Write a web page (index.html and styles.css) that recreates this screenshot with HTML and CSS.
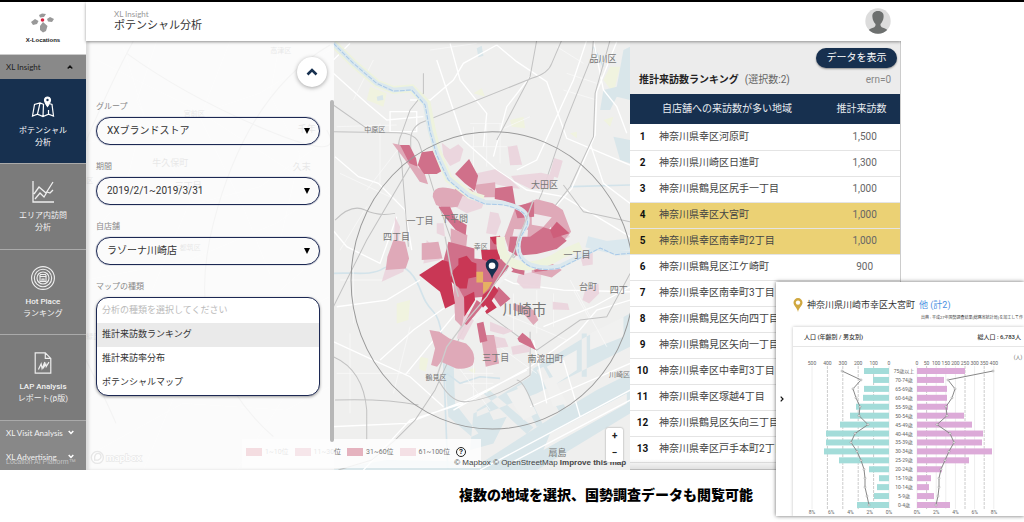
FILE: index.html
```html
<!DOCTYPE html>
<html lang="ja">
<head>
<meta charset="utf-8">
<title>ポテンシャル分析</title>
<link rel="stylesheet" href="styles.css">
</head>
<body>
<div class="app">
  <aside class="sidebar">
    <div class="logo">
      <svg width="24" height="20" viewBox="0 0 24 20"><g fill="#999"><path d="M8 2l3-1.500 4 .5-2 3-4 .5z M0 9l4-3 3.500 2-1.500 3-4 1z M16 6l3-2 4 2-2 3-4-.5z M9 13l3-4 4.500 4-1.500 5-3 1.500-3-2.500z"/></g><circle cx="11.500" cy="7" r="1.800" fill="#d8203f"/></svg>
      <span>X-Locations</span>
    </div>
    <button class="section open">XL Insight <svg width="6" height="4" viewBox="0 0 6 4"><path d="M.7 3.500L3 1l2.300 2.500" fill="none" stroke="#111" stroke-width="1.300"/></svg></button>
    <nav class="nav">
      <a class="item active" href="#">
        <svg width="24" height="22" viewBox="0 0 24 22" fill="none" stroke="#fff" stroke-width="1.200"><path d="M13 8.500L9 7 3.500 8.500 1.500 20l5-1.800 5.500 2.300 5.500-2.300 5 1.800L21 8.500l-2-.7M9 7L6.500 18M12.500 8.500L12 20.500M17.500 14v4"/><path d="M16.500 1a3 3 0 0 0-3 3c0 2 3 6.500 3 6.500s3-4.500 3-6.500a3 3 0 0 0-3-3z" fill="#fff"/><circle cx="16.500" cy="4" r="1.200" fill="#17304f" stroke="none"/></svg>
        <span>ポテンシャル<br>分析</span>
      </a>
      <a class="item" href="#">
        <svg width="24" height="22" viewBox="0 0 24 22" fill="none" stroke="#eee" stroke-width="1.300"><path d="M2 0v21h21M3 13l5-7 7 6 7-11M4 18l5-6 4 4 3-5 3 1 3-3"/></svg>
        <span>エリア内訪問<br>分析</span>
      </a>
      <a class="item" href="#">
        <svg class="round" width="24" height="24" viewBox="0 0 24 24" fill="none" stroke="#eee" stroke-width="1.100"><circle cx="12" cy="12" r="11.400"/><circle cx="12" cy="12" r="8.700"/><circle cx="12" cy="12" r="6"/><path d="M9 11v4.500h6V11M8.500 10.500l1-2h5l1 2M8.500 10.500h7M11 15.500v-2.500h2v2.500"/></svg>
        <span><b>Hot Place</b><br>ランキング</span>
      </a>
      <a class="item" href="#">
        <svg width="20" height="22" viewBox="0 0 20 24" fill="none" stroke="#eee" stroke-width="1.300"><path d="M1.500 1h11l6 6v16h-17zM12.500 1v6h6M5 19l3-6 1 5 3-7-2 7 3-5 .5 3 3-5"/></svg>
        <span><b>LAP Analysis</b><br>レポート(β版)</span>
      </a>
    </nav>
    <div class="more">
      <button class="section">XL Visit Analysis <svg width="6" height="5" viewBox="0 0 6 5"><path d="M.7 1L3 3.500 5.300 1" fill="none" stroke="#fff" stroke-width="1.500"/></svg></button>
      <button class="section">XL Advertising <svg width="6" height="5" viewBox="0 0 6 5"><path d="M.7 1L3 3.500 5.300 1" fill="none" stroke="#fff" stroke-width="1.500"/></svg></button>
      <small class="tagline">Location AI Platform™</small>
    </div>
  </aside>

  <div class="main">
    <header class="header">
      <div class="titles"><small>XL Insight</small><h1>ポテンシャル分析</h1></div>
      <svg class="avatar" width="26" height="26" viewBox="0 0 26 26"><circle cx="13" cy="13" r="12.700" fill="#dcdcdc"/><path d="M13 3c-4 0-6 2.500-5.600 6 .2 3 1.600 5.600 3.100 7 .3 2-.5 3-2.500 3.800-2 .7-3.300 1.200-4.200 2.300A12.700 12.700 0 0 0 13 25.700a12.700 12.700 0 0 0 9.200-3.600c-.9-1.100-2.200-1.600-4.200-2.300-2-.8-2.800-1.800-2.500-3.800 1.500-1.400 2.900-4 3.100-7C19 5.500 17 3 13 3z" fill="#6d706f"/></svg>
    </header>

    <div class="content">
      <section class="map">
        <svg class="canvas" viewBox="-732 3 1632 1287" preserveAspectRatio="xMaxYMin slice">
          <rect x="-740" y="0" width="1700" height="1300" fill="#efefee"/>
          <g fill="#f0f3df">
            <path d="M120 140l50 20-10 40-50-20z M200 790l40-10-5 60-35 10z M270 950l25 5-8 40-20-8z M540 240l40-10 5 35-40-5z M430 160l25-15 10 25z M820 120l20-40 30 0-20 80z M820 240l30-10-10 30z M720 280l20-5v20z M415 990l20-8v20z M465 1050l18-6v22z"/>
          </g>
          <g fill="#d9e6ea">
            <path d="M820 150l40-10 20-110 20-10v160l-40-10-20 40-30 0z M850 290l50 10v70l-30-10z M440 25l15-8 5 30-15 5z M140 170l18-5 2 15-18 2z"/>
            <path d="M900 820L750 900 610 985 600 1010 440 1110 440 1130 620 1060 900 920z M420 1290L700 1110 800 1050 900 1000V1120L620 1290z M340 950l15 180 70 60 20-10-70-90-5-140z M430 1120l40-20 20 40 40-10-40 80-70 20z M0 1290l170-30 260 5v25z M755 880h15v130h-15z M640 980l70 130-20 10-70-130z M460 1060l20-8 130 110-20 20z M560 1040l18-8 60 120-18 8z"/>
          </g>
          <g fill="#f1f1f0"><path d="M650 980l90-50v60l-60 40z M780 880l100-50v60l-100 40z M530 1060l50-20 40 80-40 20z M660 1180l230-120v30l-250 140z M640 1020l30-10 40 80-40 10z"/></g>
          <g fill="none" stroke="#d3e3ea" stroke-width="5"><path d="M10 700c60-5 110 10 150-15s80 0 100 40 20 60 50 90 30 120 33 220l10 250M720 440l180-5M350 1000l40 30 60-20 60 5M820 80l-30-60"/></g>
          <g fill="none" stroke="#fff" stroke-width="4">
            <path d="M10 100l100 90 60 50 110-10M15 350l70 60 60 20 80 80 20 120M60 10l-50 50M240 180l60 0 70-60 30-50 100-55 M500 15l60 50 90 60 60 170 190 80M320 60l80 240 100 90 90 60 110 20 200 120M600 110l-70 90-40 150M860 5l-60 150-5 130-70 160-220 250-100 90-180 220M790 0l30 150 40 50 30 80M0 560l50 60 100 50 50-140M20 800l150-20 100-60M0 900l130 60 110 50 100 90M150 960l100-90 140-100M470 690l80 40 150 20 200 5M370 1110l230-130 140-100 60-70 100-30M0 1160l230-10 180-70 180-90M600 1100l300-130M640 860l150-60 110-60M450 1290l450-240M540 1270l360-190M100 1290l140-150 160-50M180 215l80 0v60l-80 0zM770 0l-40 120-110 240-60 30M360 10l30 110 80 100-10 100M780 310l40 120 80 60M610 900l40 190M700 960l50 170"/>
          </g>
          <g fill="none" stroke="#fafafa" stroke-width="2">
            <path d="M20 260l180-5M30 400l170 80M70 180l60-120M300 30l140-20M420 250h100M430 260v140M470 250v130M510 250v120M420 320h110M710 100l90 30M700 150l100 30M600 230l-90 40M680 20l80 50M30 720h130M70 680v170M20 1000h220M60 880v240M240 860l-50 200M520 820l190 80M550 760v120M620 750v130M670 760v100M730 750l50 90M480 900l140 100M370 960l110 150M430 960v110M470 960v100M400 1000h90M400 1030h90M720 720l110 200M110 500l-80 130M110 450l100-130M150 250v180"/>
            <path d="M-700 60l300 150 400 260M-620 20l60 200-60 250-100 120M-732 310l250-60 270-90 230-140M-520 3l-60 180 160 300-140 330M-400 490l190-50 200-140M-300 3l-90 230 130 270 80 200M-732 720l310-60 260-110 160-110M-732 900l260-110 300 70 170-90M-732 1080l400-200 300 60M-732 1250l290-160 310 20 130-70M-560 1290l130-310 190-150 160-140M-280 1290l150-230-60-260M-150 3l-30 160 90 180-60 260"/>
          </g>
          <g fill="none" stroke="#c2c2c2" stroke-width="3">
            <path d="M-590 3q-60 110-142 300M-610 40q180 130 420 230t180 0M0 15Q-250 160-350 550T-170 1190M-732 960q60 120 90 190M10 195l100 70M10 275l190 3q60 0 70 40l40 130 60 170 30 60M280 100l0 60-40 50-25 70q-20 40 0 90l20 250M695 0l-30 70q-10 30-60 45L280 245q-40 15-38 60l0 70L110 600 10 800M790 0l-5 50-80 200-70 210-110 240-50 60-50 60-60 120-50 110-60 90-60 60-70 60-100 30M840 0l-45 160-5 130-70 150-150 190-90 110M620 0l-20 110-100 190M15 540q50-50 90-30t90 10M700 435l60 80 140 30M470 820l150 110 130-90 80-10 70-130M320 1010q40 80 90 75 90-10 190-80v-130M10 950q90 40 100 160v90M15 1080q150-5 250 15M560 1020q20 0 50 80"/>
          </g>
          <g fill="#ead4dc" opacity=".92">
            <path d="M335 308l25 20 25-15 15 15-10 35-30 15-20-30z M533 320l28-4 15 58-36 2z M672 354l26 8-15 52-25-10z M440 400l55-12 45 30 30 28-25-2-50-12-60 5z M543 408l90-10 40 10-10 35-60 5-50-25z M375 465l50-15 40 30-10 25-45 15-35-20z M480 515l25 5 8 25-15 40-30-5z M195 530l15 30-5 60-15 0z M320 550l20 0 5 40-25-10z M748 638l40-5v40l-30 5z M565 705l70-15-5 55-50 0-20-20z M765 750l40-20 2 30-30 30-20-10z M668 785l45 5 5 20-50-2z M543 920l60-12-5 28-50 8z M475 885l50 10 10 25-45 5z M290 600l20 20 20 40-50 10z M180 640l50 5-10 50-65 30z M480 845l70 28-30 10-40-10z M630 600l70-40 20 30-50 25z M610 510l60 10-20 40-40-15z M400 820l40 5-40 75-20-5z"/>
          </g>
          <g fill="#dfa9b8">
            <path d="M187 310l25 5 30 50 40 30 12 38-25-8-40-60z M308 470q0-35 50-25l45 10-20 45-40 5-25-10z M375 438l50 10 10 15-20 12-40-20z M430 435l65-8 3 45-50 0z M190 600l35 5 12 50-10 30-60 5 5-40z M275 610l50-5 12 50-62 5z M362 565l50 20-5 50-45-20z M298 870l30 5 30 20 50 15q35 30 20 65-20 15-50 10l-45-20-12 15-18-5 12-50z M452 885l40 0 15 85-40 10z M370 720l40 60-15 80-20-20z M550 790l40 10 20 10 15 30-15 15-30-35-30-10z M555 505l65-27 48 12 30 20 25 65-20 25-60 15-60 20-45 0-15-45z M605 665l45-5 45 30-30 22-60-15z"/>
          </g>
          <g fill="#efe9eb"><path d="M605 520l60 12-25 28-35-6z M552 567l42 2-2 24-45-4z M640 590l22-30 12 40z"/></g>
          <g fill="#d0708a">
            <path d="M375 402l42-45 27 50-10 45-30-22z M263 375l12-38 50-7 15 60-20 12-38 0z M495 445l52-7 10 62-35-18-28-5z M325 500l35 0 15 35 35 20-3 30-30-15-25-30z M540 590l60 0 40-28 35 10 35 30-30 25-60 15-60 5-25-15z M355 605l78 20 0 30 50 5 55-5 8 10-38 50-15 25-30 30-60 5-25-45-28-10-12-50z M480 590l30 0 0 60-30-10z M440 850l20-5 12 58-22 5z M562 895l15-17 25 20 15 32-50-25z M440 780l20 15-50 60-8-5z M490 770l15-30 36 36-30 24z M545 680l40 0-3 25-40-10z M605 668l42-2 5 25-38 5z M210 315l28 0 20 40 5 25-25-10z M552 500l60-15 0 45-50 5z"/>
          </g>
          <g fill="#c93755">
            <path d="M267 705l70-45 18 5 20 125-30 15-15-50z M370 690l15-15 0-20 25-8 15 18 14 5 0 40-24 5-5 30-20 0-20-15-10-10z M453 630l50-2 8 30-40 5-15-5z M402 770l30-15 3 25-32 50z M458 765l35-28 12 15-20 30 15 20-30 20-18-30z M480 592l30-5 4 30-22-5z"/>
          </g>
          <path d="M660 570l20-25 38 35-48 15z" fill="#ce5e7a"/>
          <path d="M439 695h20v32h-20z M459 726h28l-12 20-16 16z" fill="#e6b063"/>
          <path d="M512 590q-5 80 70 88 60 0 110-35l60-25" fill="none" stroke="#eef3dd" stroke-width="26"/>
          <path d="M10 10l60 60 70 60 50 20 55-5 45 45 15 80 15 60 35 85 65 50 40 12" fill="none" stroke="#eef3dd" stroke-width="24"/>
          <path d="M10 10l60 60 70 60 50 20 55-5 40 45 15 80 20 70 35 75 60 50 50 22 50 2q90 15 75 65l-20 35q-20 60 30 85 40 15 90 5l60-30 60-30 45 20 100-2" fill="none" stroke="#dbe8ee" stroke-width="14"/>
          <path d="M770 605l60 15 70-8" fill="none" stroke="#dbe8ee" stroke-width="34"/>
          <path d="M10 10l60 60 70 60 50 23 55-3 40 45 15 80 20 70 35 75 60 50 50 22 50 2q90 15 75 65l-20 35q-20 60 30 85 40 15 90 5l60-30 60-30 45 20 100-10" fill="none" stroke="#a9c9e8" stroke-width="3" stroke-dasharray="14 4"/>
          <path d="M545 685l-50 55M470 800l-40 40" fill="none" stroke="#f2f2f2" stroke-width="12"/>
          <path d="M610 480l-60 160-80 130-60 70-60 80-30 90M345 590l20 110 20 70" fill="none" stroke="#ccc" stroke-width="4"/>
          <ellipse cx="487" cy="721" rx="424" ry="446" fill="none" stroke="#999" stroke-width="3"/>
          <g class="place" text-anchor="middle">
            <g class="md"><text x="819" y="66">品川区</text><text x="643" y="443">大田区</text><text x="270" y="551">一丁目</text><text x="373" y="547">下平間</text><text x="199" y="601">四丁目</text><text x="741" y="654">一丁目</text><text x="774" y="751">台町</text><text x="866" y="760">四丁</text><text x="497" y="962">三丁目</text><text x="646" y="966">南渡田町</text><text x="682" y="1249">扇島</text><text x="-479" y="379">牛久保町</text><text x="-85" y="391">久末</text><text x="-425" y="446">三丁目</text><text x="-70" y="275">千年</text></g>
            <g class="sm"><text x="134" y="277">中原区</text><text x="452" y="627">幸区</text><text x="318" y="1021">鶴見区</text><text x="868" y="1011">川崎区</text><text x="-148" y="40">高津区</text><text x="-407" y="229">宮前区</text><text x="-419" y="629">都筑区</text><text x="-721" y="429">区</text><text x="-710" y="898">緑区</text></g>
            <text class="lg" x="583" y="826">川崎市</text>
          </g>
          <path d="M486 717c-4-20-19-26-19-42a19 19 0 0 1 38 0c0 16-15 22-19 42z" fill="#17304f"/><circle cx="486" cy="677" r="10" fill="#fff"/>
          <g fill="#fff" stroke="#777" stroke-width="4"><circle cx="-698" cy="1252" r="18"/><path d="M-706 1260v-10q2-10 10-10t9 8-9 12z"/><text class="brand" x="-672" y="1262">mapbox</text></g>
        </svg>
        <div class="legend">
          <span><i class="l1"></i>1~10位</span><span><i class="l2"></i>11~30位</span><span><i class="l3"></i>31~60位</span><span><i class="l4"></i>61~100位</span>
          <button class="help" aria-label="ヘルプ">?</button>
        </div>
        <div class="credit"><a href="#">© Mapbox</a> <a href="#">© OpenStreetMap</a> <a href="#"><b>Improve this map</b></a></div>
        <div class="zoom"><button>+</button><button>−</button></div>

        <form class="panel">
          <button class="collapse" type="button" aria-label="閉じる"><svg width="12" height="8" viewBox="0 0 12 8"><path d="M1.500 6.500L6 2l4.500 4.500" fill="none" stroke="#17304f" stroke-width="2.600"/></svg></button>
          <label for="group">グループ</label>
          <div class="field"><select id="group"><option>XXブランドストア</option></select></div>
          <label for="term">期間</label>
          <div class="field"><select id="term"><option>2019/2/1~2019/3/31</option></select></div>
          <label for="shop">自店舗</label>
          <div class="field"><select id="shop"><option>ラゾーナ川崎店</option></select></div>
          <label for="kind">マップの種類</label>
          <select id="kind" class="list" size="4"><option class="hint" disabled>分析の種類を選択してください</option><option class="hover">推計来訪数ランキング</option><option>推計来訪率分布</option><option>ポテンシャルマップ</option></select>
        </form>
      </section>

      <section class="ranking">
        <div class="ranking-head">
          <button class="show">データを表示</button>
          <div class="ranking-title"><h2>推計来訪数ランキング</h2><span>(選択数:2)</span><span class="ern">ern=0</span></div>
        </div>
        <table>
          <thead><tr><th class="no"></th><th class="area">自店舗への来訪数が多い地域</th><th class="num">推計来訪数</th></tr></thead>
          <tbody>
            <tr><th>1</th><td>神奈川県幸区河原町</td><td>1,500</td></tr>
            <tr><th>2</th><td>神奈川県川崎区日進町</td><td>1,300</td></tr>
            <tr><th>3</th><td>神奈川県鶴見区尻手一丁目</td><td>1,000</td></tr>
            <tr class="on"><th>4</th><td>神奈川県幸区大宮町</td><td>1,000</td></tr>
            <tr class="on"><th>5</th><td>神奈川県幸区南幸町2丁目</td><td>1,000</td></tr>
            <tr><th>6</th><td>神奈川県鶴見区江ケ崎町</td><td>900</td></tr>
            <tr><th>7</th><td>神奈川県幸区南幸町3丁目</td><td></td></tr>
            <tr><th>8</th><td>神奈川県鶴見区矢向四丁目</td><td></td></tr>
            <tr><th>9</th><td>神奈川県鶴見区矢向一丁目</td><td></td></tr>
            <tr><th>10</th><td>神奈川県幸区中幸町3丁目</td><td></td></tr>
            <tr><th>11</th><td>神奈川県幸区塚越4丁目</td><td></td></tr>
            <tr><th>12</th><td>神奈川県鶴見区矢向三丁目</td><td></td></tr>
            <tr><th>13</th><td>神奈川県幸区戸手本町2丁目</td><td></td></tr>
          </tbody>
        </table>
      </section>
    </div>
  </div>
</div>

<p class="caption">複数の地域を選択、国勢調査データも閲覧可能</p>

<aside class="popup">
  <button class="next" aria-label="開閉"><svg width="4" height="6" viewBox="0 0 4 6"><path d="M.7.7L3 3 .7 5.300" fill="none" stroke="#111" stroke-width="1.200"/></svg></button>
  <div class="popup-body">
    <div class="place-row">
      <svg width="10" height="14" viewBox="0 0 10 14"><path d="M5 14C4 9.500.5 8 .5 4.600a4.500 4.500 0 0 1 9 0C9.500 8 6 9.500 5 14z" fill="#d0a840"/><circle cx="5" cy="4.600" r="2.200" fill="#fff"/></svg>
      <h3>神奈川県川崎市幸区大宮町</h3><a href="#">他 (計2)</a>
    </div>
    <p class="source">出典 : 平成27年国勢調査結果(総務省統計局)を加工して作</p>
    <div class="card">
      <div class="card-head"><b>人口 (年齢別 / 男女別)</b><b>総人口 : 6,783人</b></div>
      <svg class="chart" id="chart" viewBox="0 0 231 170" preserveAspectRatio="xMinYMin slice"></svg>
    </div>
  </div>
</aside>
<script src="chart.js"></script>
</body>
</html>
```
FILE: chart.js
```js
// Population pyramid: men to the left, women to the right, share as a line.
const ages = ['75歳以上','70-74歳','65-69歳','60-64歳','55-59歳','50-54歳','45-49歳','40-44歳','35-39歳','30-34歳','25-29歳','20-24歳','15-19歳','10-14歳','5-9歳','0-4歳'];
const men = [25,16,25,26,33,39,49,63,63,65,50,20,10,12,15,32];
const women = [48,27,30,30,31,47,55,66,65,75,52,25,14,12,17,33];
const menLine = [47,28,36,33,29,30,21,34,38,32,28,25,24,24,22,20];
const womenLine = [76,31,38,35,29,30,20,33,37,32,28,24,22,22,21,19];
const L = 96, R = 124, top0 = 24;
const y = i => top0 + i * 134 / 15;
let out = '';
const text = (x, yy, s) => { out += `<text x="${x}" y="${yy}">${s}</text>`; };
const grid = (x, dash) => { out += `<line class="${dash ? 'dash' : 'rule'}" x1="${x}" x2="${x}" y1="19" y2="162"/>`; };
[500,400,300,200,100,0].forEach((v, i) => { const x = 19 + i * 15.4; grid(x, i > 0 && i < 5); text(x, 18, v); });
[0,50,100,150,200,250,300,350,400].forEach((v, i) => { const x = R + i * 9.6; grid(x, [1,5,7].includes(i)); text(x, 18, v); });
[8,6,4,2,0].forEach((v, i) => { text(19 + i * 19.25, 167, v + '%'); text(R + (4 - i) * 19.25, 167, v + '%'); });
ages.forEach((a, i) => {
  out += `<rect class="men" x="${L - men[i]}" y="${y(i) - 3}" width="${men[i]}" height="6"/>`;
  out += `<rect class="women" x="${R}" y="${y(i) - 3}" width="${women[i]}" height="6"/>`;
  text(111, y(i) + 2, a);
});
const line = (base, sign, data) => {
  out += `<polyline points="${data.map((v, i) => (base + sign * v) + ',' + y(i)).join(' ')}"/>`;
  data.forEach((v, i) => { out += `<circle cx="${base + sign * v}" cy="${y(i)}" r="1"/>`; });
};
line(L, -1, menLine);
line(R, 1, womenLine);
text(225, 12, '(人)');
document.getElementById('chart').innerHTML = out;
```
FILE: styles.css
```css
* { box-sizing: border-box; }
body { margin: 0; border-top: 2px solid #000; height: 100vh; overflow: hidden; position: relative; background: #fff; color: #333; font: 10px/12px Roboto, "Noto Sans CJK JP", sans-serif; }
button { font: inherit; border: 0; padding: 0; background: none; color: inherit; }
a { color: inherit; text-decoration: none; }
h1, h2, h3, p { margin: 0; font-weight: 400; }
svg { display: block; flex: none; }

.app { display: flex; width: 88%; height: calc(90vh - 2px); overflow: hidden; }
.sidebar { width: 86px; flex: none; display: flex; flex-direction: column; background: #7b7b7b; color: #f2f2f2; }
.logo { height: 53px; flex: none; background: #fff; border-bottom: 1px solid #ccc; color: #222; display: flex; flex-direction: column; align-items: center; padding-top: 11px; gap: 1px; font: bold 6px/12px "Liberation Sans", sans-serif; }
.section { display: flex; align-items: center; justify-content: space-between; width: 100%; height: 24px; padding: 0 12px 0 6px; font: 8px/12px Lato, sans-serif; white-space: nowrap; }
.section.open { background: #898989; color: #222; padding-right: 13px; flex: none; }
.nav { flex: 1; display: flex; flex-direction: column; }
.item { flex: 1; display: flex; flex-direction: column; align-items: center; gap: 7px; padding-top: 17px; border-bottom: 1px solid #aaa; text-align: center; font-size: 8px; }
.item b { font-weight: 500; }
.item.active { background: #17304f; color: #fff; }
.item .round { margin: -1px; }
.more { height: 49px; flex: none; background: #888; position: relative; }
.tagline { position: absolute; left: 6px; bottom: 3px; font: 7px/10px "Liberation Sans", sans-serif; color: #c4c4c4; white-space: nowrap; }

.main { flex: 1; min-width: 0; display: flex; flex-direction: column; }
.header { height: 39px; flex: none; display: flex; justify-content: space-between; align-items: center; padding: 0 10px 2px 28px; background: #fff; box-shadow: 0 1px 3px rgba(0,0,0,.4); z-index: 2; }
.titles small { display: block; font: 8px/10px Lato, sans-serif; color: #999; }
.titles h1 { font-size: 11px; line-height: 14px; color: #333; }
.content { flex: 1; display: flex; min-height: 0; }

.map { flex: 1; position: relative; overflow: hidden; min-width: 0; }
.canvas { width: 100%; height: 100%; }
.place text { fill: #777; font-family: "Noto Sans CJK JP", sans-serif; }
.place .md text { font-size: 27px; }
.place .sm text { font-size: 21px; }
.place .lg { font-size: 44px; }
.brand { font: bold 30px Lato, sans-serif; paint-order: stroke; }
.legend { position: absolute; left: 156px; bottom: 2px; height: 29px; display: flex; align-items: center; gap: 6px; padding: 0 15px 3px 4px; background: rgba(255,255,255,.8); font-size: 7px; color: #777; }
.legend span { display: flex; align-items: center; gap: 3px; white-space: nowrap; }
.legend i { width: 16px; height: 8px; background: #e5b3bf; }
.legend .l1 { background: #c93755; }
.legend .l2 { background: #d0718a; }
.legend .l4 { background: #f4e0e5; }
.help { width: 10px; height: 10px; border: 1px solid #222; border-radius: 50%; font: bold 8px/8px Roboto, sans-serif; color: #222; }
.credit { position: absolute; right: 4px; bottom: 1px; font: 8px/12px "Liberation Sans", sans-serif; color: #444; white-space: nowrap; }
.zoom { position: absolute; right: 7px; bottom: 8px; width: 17px; background: #fff; border-radius: 2px; box-shadow: 0 0 2px rgba(0,0,0,.4); display: grid; font-weight: 700; color: #222; }
.zoom button { height: 17px; }

.panel { position: absolute; left: 0; top: 0; bottom: 0; width: 248px; padding: 16px 14px 0 10px; background: rgba(253,253,253,.84); box-shadow: inset 3px 0 3px rgba(0,0,0,.12); display: flex; flex-direction: column; }
.panel::after { content: ""; position: absolute; right: 0; top: 59px; bottom: 28px; width: 4px; border-radius: 2px; background: #b7b7b7; }
.collapse { align-self: flex-end; width: 30px; height: 30px; margin: 0 -7px 14px 0; border-radius: 50%; background: #fff; box-shadow: 0 1px 4px rgba(0,0,0,.35); display: grid; place-items: center; }
.panel label { font-size: 8px; line-height: 12px; color: #888; margin-bottom: 4px; }
.field { position: relative; margin-bottom: 16px; }
.field::after { content: ""; position: absolute; right: 10px; top: 11px; border: 3px solid transparent; border-top: 6px solid #000; border-bottom: 0; }
.panel select { appearance: none; display: block; width: 100%; border: 1px solid #1c2853; box-shadow: 0 0 1px #1c2853; background: transparent; color: #333; outline: 0; }
.field select { height: 28px; border-radius: 14px; padding: 0 20px 0 10px; font: 10px/16px Roboto, "Noto Sans CJK JP", sans-serif; }
.panel .list { height: 99px; border-radius: 12px; background: #fff; padding: 1px 0; overflow: hidden; box-shadow: 0 1px 3px rgba(0,0,0,.4); font: 9px/14px "Noto Sans CJK JP", sans-serif; }
.list option { display: flex; align-items: center; height: 24px; padding: 0 5px 3px; color: #333; }
.list .hint { color: #bbb; }
.list .hover { background: #eaeaea; }

.ranking { width: 271px; flex: none; background: #fff; border-right: 1px solid #ccc; position: relative; overflow: hidden; }
.ranking::after { content: ""; position: absolute; left: 0; right: 0; bottom: 0; height: 10px; background: linear-gradient(transparent, rgba(0,0,0,.12)); border-bottom: 1px solid #bbb; }
.ranking-head { height: 53px; background: #ececec; padding: 7px 3px 0 9px; display: flex; flex-direction: column; }
.show { align-self: flex-end; height: 20px; width: 81px; border-radius: 10px; background: #17304f; color: #fff; box-shadow: 0 1px 2px rgba(0,0,0,.4); }
.ranking-title { display: flex; gap: 6px; margin-top: 5px; padding-right: 6px; color: #666; line-height: 14px; }
.ranking-title h2 { font-size: 10px; line-height: 14px; font-weight: 700; color: #222; }
.ern { margin-left: auto; color: #888; }
table { width: 100%; border-collapse: collapse; table-layout: fixed; }
thead th { height: 30px; background: #17304f; color: #e8ecf0; font-weight: 400; padding: 0; }
thead .area { text-align: left; padding-left: 7px; }
thead .num { padding-right: 6px; }
.no { width: 25px; }
.num { width: 71px; }
tbody th, tbody td { height: 26px; padding: 0; border-bottom: 1px solid #e4e4e4; color: #444; white-space: nowrap; }
tbody th { color: #111; font-weight: 700; }
tbody td:nth-child(2) { padding-left: 4px; }
tbody td:last-child { text-align: center; color: #666; }
.on { background: #ebd174; }

.caption { padding: 14px 0 0 459px; font: 900 14px/20px "Noto Sans CJK JP", sans-serif; color: #000; white-space: nowrap; }

.popup { position: absolute; left: 776px; right: 0; top: 280px; height: 234px; display: flex; background: #fff; box-shadow: 0 0 4px rgba(0,0,0,.6); overflow: hidden; }
.next { width: 17px; flex: none; display: flex; align-items: center; padding-left: 4px; }
.popup-body { flex: 1; min-width: 0; padding-top: 16px; }
.place-row { display: flex; align-items: center; gap: 4px; height: 14px; white-space: nowrap; }
.place-row h3 { font-size: 9px; }
.place-row a { font-size: 9px; color: #4a90e2; }
.source { margin: 2px 0 5px 128px; font-size: 4px; line-height: 8px; color: #444; white-space: nowrap; }
.card { box-shadow: 0 0 3px rgba(0,0,0,.25); }
.card-head { height: 20px; display: flex; justify-content: space-between; align-items: center; padding: 0 3px 0 11px; font-size: 6px; border-bottom: 1px solid #e6e6e6; }
.card-head b { font-weight: 500; }
.chart { width: 100%; }
.chart text { font-size: 5px; text-anchor: middle; fill: #666; }
.chart .rule { stroke: #eee; stroke-width: 1; }
.chart .dash { stroke: #ccc; stroke-width: 1; stroke-dasharray: 3 1; }
.chart .men { fill: #a3dcd9; }
.chart .women { fill: #dcaad8; }
.chart polyline { fill: none; stroke: #888; stroke-width: 1; }
.chart circle { fill: #fff; stroke: #888; stroke-width: .5; }
```
